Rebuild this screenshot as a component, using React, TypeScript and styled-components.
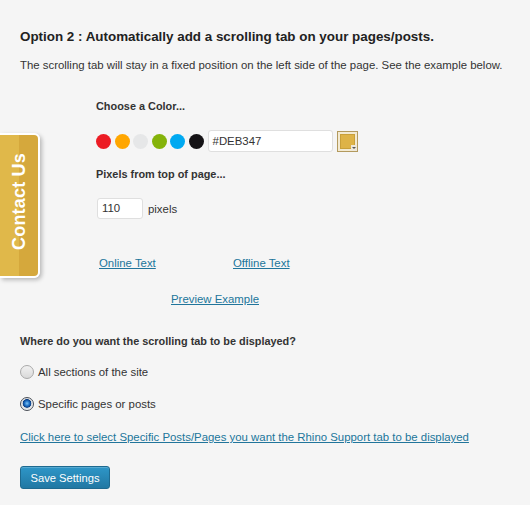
import React from "react";
import styled, { createGlobalStyle } from "styled-components";

const Global = createGlobalStyle`
  html, body { margin: 0; padding: 0; background: #f5f5f5; }
  body { font-family: "Liberation Sans", Arial, sans-serif; color: #333; }
`;

const Page = styled.div`
  position: relative;
  width: 530px;
  height: 505px;
  box-sizing: border-box;
  padding: 29px 20px 0 20px;
  background: #f5f5f5;
  overflow: hidden;
`;

const Heading = styled.h3`
  margin: 0;
  font-size: 13.4px;
  line-height: 16px;
  font-weight: bold;
  color: #222;
`;

const Para = styled.p<{ $mt: number }>`
  margin: ${(p) => p.$mt}px 0 0 0;
  font-size: 11.4px;
  line-height: 16px;
  color: #333;
  white-space: nowrap;
`;

const Label = styled.div<{ $mt: number }>`
  margin-top: ${(p) => p.$mt}px;
  font-size: 10.9px;
  line-height: 16px;
  font-weight: bold;
  color: #333;
`;

const Indent = styled.div`
  margin-left: 76px;
`;

const SwatchRow = styled.div`
  margin-top: 16px;
  display: flex;
  align-items: center;
  height: 22px;
`;

const Swatch = styled.span<{ $c: string }>`
  width: 15px;
  height: 15px;
  border-radius: 50%;
  background: ${(p) => p.$c};
  margin-right: 3.6px;
  flex: none;
`;

const TextInput = styled.div<{ $w: number; $h: number }>`
  box-sizing: border-box;
  width: ${(p) => p.$w}px;
  height: ${(p) => p.$h}px;
  background: #fff;
  border: 1px solid #dfdfdf;
  border-radius: 3px;
  padding-left: 4px;
  font-size: 11.4px;
  line-height: ${(p) => p.$h - 2}px;
  color: #333;
`;

const ColorBox = styled.span`
  position: relative;
  box-sizing: border-box;
  margin-left: 4px;
  width: 21px;
  height: 21px;
  border: 1px solid #b39a5e;
  background: #f3ead2;
  padding: 2px;
  display: flex;
`;

const ColorFill = styled.span`
  flex: 1;
  background: #deb347;
  border: 1px solid #c9a03a;
`;

const Notch = styled.span`
  position: absolute;
  right: 0;
  bottom: 0;
  width: 6px;
  height: 6px;
  background: #eee8da;
  display: flex;
  align-items: center;
  justify-content: center;
  &::after {
    content: "";
    border-left: 2px solid transparent;
    border-right: 2px solid transparent;
    border-top: 2px solid #555;
  }
`;

const PixelRow = styled.div`
  margin-top: 16px;
  display: flex;
  align-items: center;
  gap: 5px;
  font-size: 11.4px;
`;

const LinkRow = styled.div`
  margin-top: 36px;
  display: grid;
  grid-template-columns: 134px auto;
  padding-left: 3px;
`;

const Link = styled.a`
  font-size: 11.4px;
  line-height: 16px;
  color: #21759b;
  text-decoration: underline;
  cursor: pointer;
`;

const PreviewWrap = styled.div`
  margin-top: 19px;
  padding-left: 75px;
  line-height: 16px;
`;

const RadioRow = styled.label<{ $mt: number }>`
  margin-top: ${(p) => p.$mt}px;
  display: flex;
  align-items: center;
  gap: 4px;
  font-size: 11.4px;
  line-height: 16px;
  color: #333;
`;

const Radio = styled.span<{ $on?: boolean }>`
  box-sizing: border-box;
  width: 14px;
  height: 14px;
  border-radius: 50%;
  border: 1px solid ${(p) => (p.$on ? "#4a4f57" : "#a9a9a9")};
  background: ${(p) =>
    p.$on
      ? "radial-gradient(circle at 50% 45%, #7cc3f5 0, #1e6fc4 2.5px, #0b3f85 4px, #d5d8dc 4.6px, #eef0f2 6px)"
      : "linear-gradient(#f1f1f1, #d9d9d9)"};
  flex: none;
`;

const LongLinkWrap = styled.div`
  margin-top: 16px;
  line-height: 16px;
`;

const Button = styled.button`
  display: block;
  margin-top: 21px;
  box-sizing: border-box;
  width: 90px;
  height: 23px;
  border: 1px solid #1e6a90;
  border-radius: 3px;
  background: linear-gradient(#2e96c8, #2178a3);
  color: #fff;
  font-family: "Liberation Sans", Arial, sans-serif;
  font-size: 11.2px;
  padding: 0;
  box-shadow: inset 0 1px 0 rgba(255, 255, 255, 0.2);
`;

const ContactTab = styled.div`
  position: absolute;
  left: 0;
  top: 133px;
  width: 40px;
  height: 145px;
  box-sizing: border-box;
  border: 2px solid #fff;
  border-left: none;
  border-radius: 0 6px 6px 0;
  background: linear-gradient(90deg, #e0b84a 0, #e0b84a 50%, #d5a83c 50%, #d5a83c 100%);
  box-shadow: 2px 2px 4px rgba(0, 0, 0, 0.25);
  display: flex;
  align-items: center;
  justify-content: center;
`;

const TabText = styled.span`
  writing-mode: vertical-rl;
  transform: rotate(180deg) translateY(4px);
  color: #fff;
  font-weight: bold;
  font-size: 18px;
  letter-spacing: 0.2px;
`;

const swatches = ["#ec1c24", "#ffa600", "#e6e7e8", "#84b30a", "#00a9f1", "#151316"];

export default function App() {
  return (
    <>
      <Global />
      <Page>
        <Heading>Option 2 : Automatically add a scrolling tab on your pages/posts.</Heading>
        <Para $mt={12}>
          The scrolling tab will stay in a fixed position on the left side of the page. See the example below.
        </Para>
        <Indent>
          <Label $mt={25}>Choose a Color...</Label>
          <SwatchRow>
            {swatches.map((c) => (
              <Swatch key={c} $c={c} />
            ))}
            <TextInput $w={125} $h={22}>#DEB347</TextInput>
            <ColorBox>
              <ColorFill />
              <Notch />
            </ColorBox>
          </SwatchRow>
          <Label $mt={14}>Pixels from top of page...</Label>
          <PixelRow>
            <TextInput $w={46} $h={21} style={{ marginLeft: 1 }}>110</TextInput>
            <span>pixels</span>
          </PixelRow>
          <LinkRow>
            <Link>Online Text</Link>
            <Link>Offline Text</Link>
          </LinkRow>
          <PreviewWrap>
            <Link>Preview Example</Link>
          </PreviewWrap>
        </Indent>
        <Label $mt={26}>Where do you want the scrolling tab to be displayed?</Label>
        <RadioRow $mt={15}>
          <Radio />
          All sections of the site
        </RadioRow>
        <RadioRow $mt={16}>
          <Radio $on />
          Specific pages or posts
        </RadioRow>
        <LongLinkWrap>
          <Link>Click here to select Specific Posts/Pages you want the Rhino Support tab to be displayed</Link>
        </LongLinkWrap>
        <Button>Save Settings</Button>
        <ContactTab>
          <TabText>Contact Us</TabText>
        </ContactTab>
      </Page>
    </>
  );
}
